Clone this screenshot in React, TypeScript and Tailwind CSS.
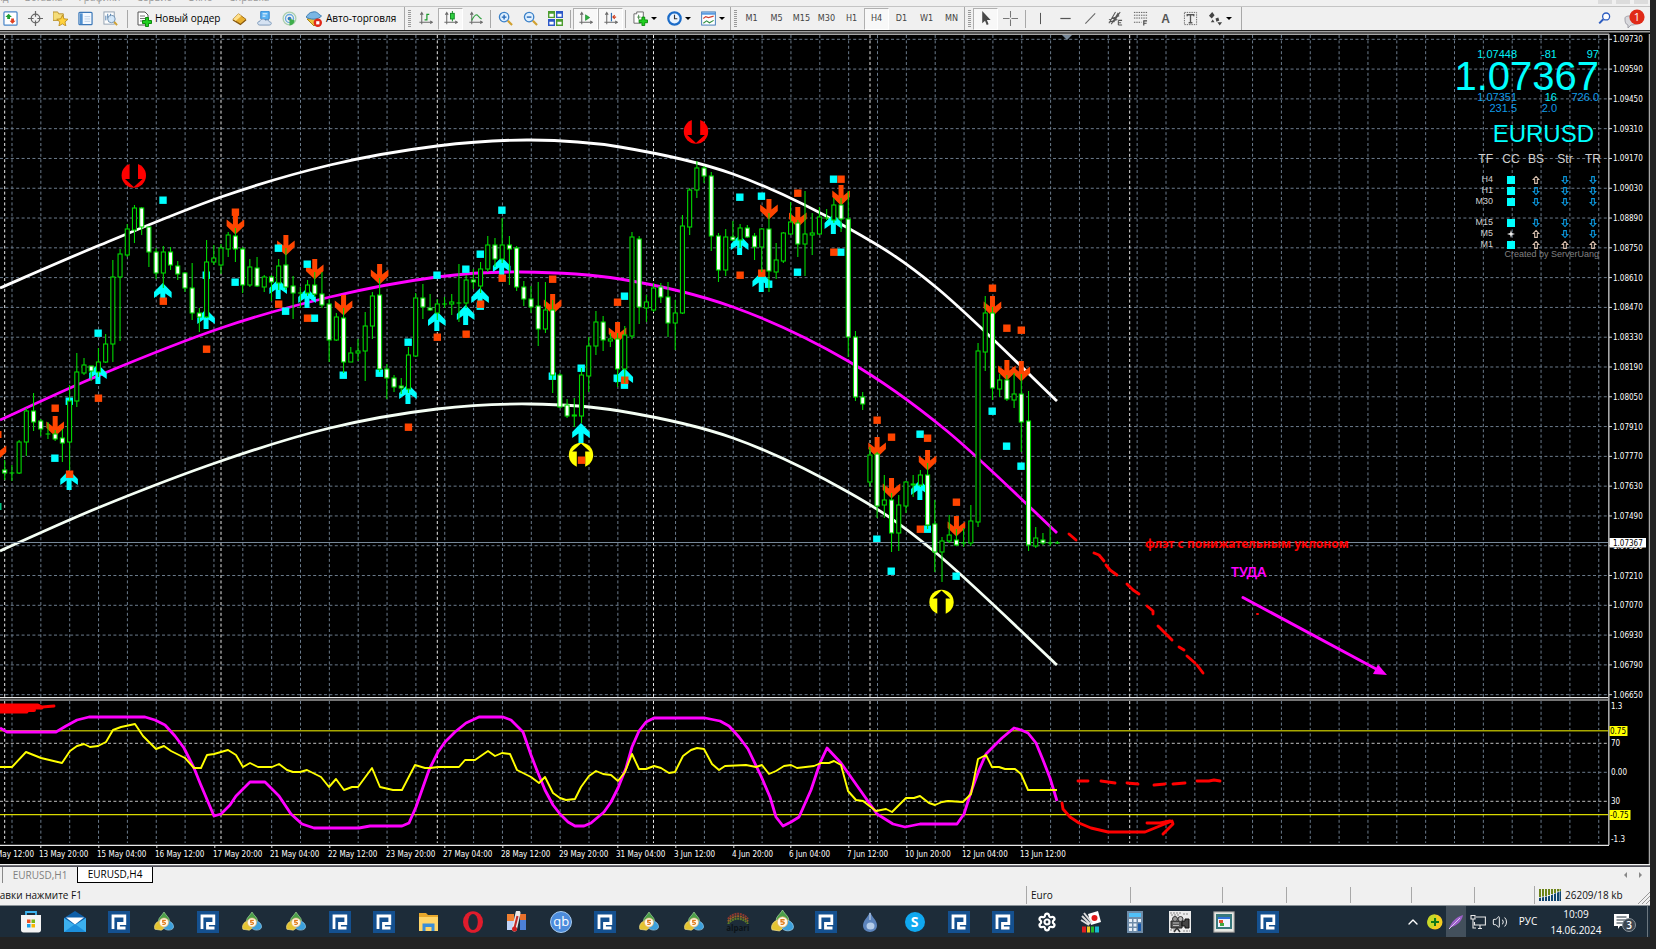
import React from 'react';
import { Settings, ChevronUp, Volume2 } from 'lucide-react';

const uiFont = "font-['Open_Sans','Noto_Sans',sans-serif]";

/* ---------- chart data ---------- */

// high, low, body top, body bottom, 1 = rising
type Candle = [number, number, number, number, number];

const candles: Candle[] = [
    [460, 480, 470, 473, 0], [465, 481, 473, 473, 0], [440, 474, 442, 473, 1], [408, 456, 411, 442, 1],
    [393, 431, 411, 422, 0], [419, 436, 421, 429, 0], [422, 439, 434, 434, 0], [430, 441, 434, 439, 0],
    [429, 462, 438, 443, 0], [385, 470, 401, 442, 1], [353, 407, 372, 401, 1], [358, 375, 365, 373, 1],
    [366, 381, 366, 371, 0], [348, 377, 362, 372, 1], [334, 363, 344, 362, 1], [260, 362, 277, 344, 1],
    [249, 341, 254, 277, 1], [224, 257, 229, 255, 1], [205, 243, 208, 230, 1], [207, 235, 208, 227, 0],
    [227, 267, 227, 252, 0], [248, 279, 252, 273, 0], [246, 288, 252, 273, 1], [247, 270, 252, 265, 0],
    [261, 280, 266, 274, 0], [272, 292, 273, 288, 0], [263, 320, 288, 313, 0], [308, 332, 313, 317, 0],
    [240, 318, 262, 317, 1], [245, 265, 258, 262, 1], [244, 274, 248, 265, 1], [232, 257, 235, 249, 1],
    [228, 262, 236, 249, 0], [247, 293, 249, 285, 0], [259, 287, 267, 285, 1], [257, 287, 268, 286, 0],
    [275, 292, 277, 287, 1], [275, 301, 277, 282, 0], [259, 290, 266, 283, 1], [248, 290, 265, 287, 0],
    [276, 319, 286, 293, 0], [287, 308, 293, 293, 0], [280, 296, 285, 293, 1], [272, 297, 285, 294, 0],
    [272, 308, 294, 305, 0], [299, 362, 304, 340, 0], [313, 341, 317, 340, 1], [308, 373, 318, 362, 0],
    [347, 362, 353, 362, 1], [339, 361, 351, 353, 1], [312, 381, 326, 351, 1], [292, 339, 296, 326, 1],
    [278, 372, 295, 369, 0], [364, 399, 369, 378, 0], [375, 392, 378, 387, 0], [378, 394, 386, 388, 0],
    [347, 393, 355, 389, 1], [293, 357, 298, 356, 1], [284, 319, 298, 307, 0], [294, 311, 308, 310, 0],
    [299, 320, 304, 313, 1], [297, 308, 304, 304, 0], [294, 315, 302, 304, 1], [264, 322, 303, 303, 0],
    [275, 308, 280, 303, 1], [269, 289, 280, 282, 0], [262, 293, 269, 286, 1], [236, 272, 245, 269, 1],
    [238, 267, 245, 259, 0], [218, 263, 245, 259, 1], [236, 285, 245, 249, 0], [246, 291, 248, 287, 0],
    [281, 306, 287, 299, 0], [286, 313, 299, 307, 0], [282, 346, 306, 329, 0], [282, 333, 310, 329, 1],
    [300, 393, 310, 375, 0], [373, 408, 375, 407, 0], [399, 418, 405, 416, 0], [398, 427, 415, 416, 0],
    [368, 423, 375, 416, 1], [337, 392, 346, 376, 1], [311, 355, 322, 346, 1], [316, 351, 322, 340, 0],
    [333, 347, 339, 341, 1], [333, 387, 339, 369, 0], [326, 383, 335, 369, 1], [232, 339, 237, 336, 1],
    [236, 324, 239, 307, 0], [295, 322, 302, 308, 1], [283, 312, 288, 310, 1], [283, 303, 287, 297, 0],
    [282, 337, 297, 323, 0], [300, 350, 313, 323, 1], [215, 314, 226, 313, 1], [188, 235, 190, 227, 1],
    [161, 198, 168, 190, 1], [166, 183, 168, 176, 0], [172, 251, 176, 236, 0], [233, 282, 236, 270, 0],
    [229, 276, 237, 270, 1], [221, 241, 237, 240, 0], [224, 248, 228, 240, 1], [225, 238, 228, 237, 0],
    [233, 260, 236, 247, 0], [228, 272, 229, 247, 1], [213, 292, 229, 271, 0], [243, 279, 260, 272, 1],
    [232, 263, 233, 261, 1], [202, 235, 222, 234, 1], [220, 257, 223, 244, 0], [191, 276, 234, 244, 1],
    [213, 255, 233, 235, 1], [207, 235, 217, 234, 1], [209, 220, 218, 218, 0], [198, 223, 205, 220, 1],
    [198, 232, 205, 219, 0], [191, 357, 219, 337, 0], [331, 401, 337, 397, 0], [392, 410, 397, 404, 0],
    [447, 487, 455, 482, 1], [452, 518, 454, 506, 0], [475, 518, 500, 505, 1], [493, 552, 500, 533, 0],
    [495, 551, 505, 533, 1], [481, 513, 482, 506, 1], [475, 497, 484, 485, 1], [470, 487, 475, 485, 1],
    [463, 529, 475, 525, 0], [500, 572, 524, 552, 0], [537, 582, 541, 552, 1], [515, 543, 535, 541, 1],
    [529, 546, 540, 545, 0], [528, 547, 543, 543, 0], [505, 546, 521, 543, 1], [343, 527, 351, 522, 1],
    [296, 371, 313, 352, 1], [307, 400, 313, 388, 0], [374, 397, 380, 389, 1], [375, 401, 380, 399, 0],
    [373, 408, 394, 400, 1], [374, 452, 394, 422, 0], [391, 551, 421, 545, 0], [527, 548, 538, 546, 1],
    [533, 545, 540, 543, 0], [525, 546, 543, 543, 0], [541, 544, 543, 543, 0],
];

// [candle index, y of the arrow's top]
const upArrows: [number, number][] = [
    [9, 470], [13, 364], [22, 283], [28, 309], [38, 279], [42, 288], [56, 384], [60, 311], [64, 305],
    [66, 288], [69, 257], [80, 423], [86, 368], [102, 235], [105, 272], [115, 214], [127, 480],
];
const downArrows: [number, number][] = [
    [-1, 440], [7, 416], [32, 214], [39, 235], [43, 259], [47, 295], [52, 264], [76, 294], [85, 322],
    [106, 199], [110, 207], [116, 185], [121, 437], [123, 478], [128, 450], [132, 516], [137, 296],
    [139, 360], [141, 361],
];

// [candle index, y of the square's centre]
const cyanMarks: [number, number][] = [
    [7, 458], [9, 401], [13, 333], [22, 200], [28, 275], [32, 282], [38, 248], [39, 311], [42, 264],
    [43, 318], [47, 375], [52, 373], [56, 342], [60, 275], [64, 269], [66, 254], [66, 306], [69, 210],
    [76, 376], [80, 368], [85, 378], [86, 296], [86, 385], [102, 197], [105, 196], [106, 284],
    [110, 272], [115, 179], [116, 252], [121, 539], [123, 571], [127, 434], [128, 529], [132, 576],
    [137, 411], [139, 446], [141, 466],
];
const orangeMarks: [number, number][] = [
    [7, 408], [9, 474], [13, 398], [22, 301], [28, 349], [32, 212], [38, 304], [42, 318], [56, 427],
    [60, 337], [64, 334], [66, 304], [69, 278], [76, 279], [80, 460], [85, 302], [86, 380], [102, 275],
    [105, 273], [110, 193], [115, 252], [116, 179], [121, 420], [123, 437], [127, 529], [128, 438],
    [132, 502], [137, 288], [139, 328], [141, 330],
];

type Point = [number, number];

const upperBand: Point[] = [[0, 288], [100, 245], [221, 197], [330, 165], [437, 146], [530, 140], [620, 147], [733, 174], [848, 228], [937, 288], [1057, 401]];
const midBand: Point[] = [[0, 420], [100, 375], [221, 328], [330, 297], [437, 277], [520, 272], [620, 279], [733, 307], [848, 361], [947, 431], [1057, 533]];
const lowerBand: Point[] = [[0, 551], [100, 507], [221, 461], [330, 428], [437, 409], [530, 404], [620, 411], [733, 438], [848, 492], [935, 552], [1057, 665]];

const cycleLine = '0,728 7,732 56,732 66,726 77,720 89,717 145,717 155,720 165,725 175,736 184,748 194,768 200,783 214,816 221,814 230,805 236,796 250,782 265,782 279,796 291,814 302,824 314,828 359,828 370,826 402,826 409,823 416,807 429,770 438,752 445,742 455,732 466,723 479,717 503,717 511,720 523,732 531,755 536,768 545,790 553,805 560,814 568,822 575,826 584,826 591,823 604,812 611,802 618,788 626,768 632,747 639,731 646,722 654,718 705,718 720,721 729,726 739,737 748,749 761,776 770,797 776,817 783,826 791,822 799,817 811,790 820,763 827,748 841,763 877,814 893,824 905,827 920,824 957,824 964,814 971,792 979,770 986,754 1002,738 1014,728 1021,730 1028,733 1036,743 1043,760 1050,778 1057,801';
const oscLine = '0,767 12,767 26,752 41,758 62,763 70,751 77,746 84,744 90,747 98,746 106,742 113,730 121,727 135,724 143,736 156,749 164,746 171,751 185,758 194,768 201,768 207,755 214,754 228,750 236,755 243,767 250,763 258,767 272,767 279,764 287,770 293,772 300,772 307,770 321,777 329,787 336,779 344,790 352,787 358,787 372,768 380,787 393,790 402,790 415,765 425,768 430,768 438,767 459,767 465,760 475,760 488,751 495,756 502,753 510,754 517,770 531,777 539,783 545,777 553,793 560,798 566,800 575,799 581,787 589,776 596,771 603,774 611,775 618,781 625,772 632,754 639,769 646,769 654,766 661,768 669,773 675,772 683,756 691,750 697,748 704,749 712,764 719,770 725,766 746,765 756,767 762,765 769,774 776,771 784,766 791,765 797,768 814,766 821,763 829,763 834,761 841,765 848,791 856,800 863,801 876,811 886,809 892,812 906,798 914,798 920,796 929,803 935,805 942,802 948,801 963,802 971,794 978,759 986,755 992,767 999,767 1005,769 1015,769 1021,774 1028,790 1057,790';

const redStrokes = [
    '1069,534 1076,540', '1094,553 1099,555 1104,561', '1106,565 1110,570 1117,575',
    '1127,584 1133,590 1139,594', '1147,606 1153,611 1153,614', '1158,626 1165,633 1172,640',
    '1179,647 1184,650', '1187,656 1195,663', '1197,665 1203,673',
    '1078,781 1088,781', '1101,781 1115,783', '1127,783 1138,784', '1154,785 1165,784',
    '1173,784 1185,783', '1197,781 1209,781 1214,780 1220,781',
    '1062,803 1063,809 1070,817 1079,823 1091,828 1108,832 1145,832 1172,821 1173,824 1163,834',
    '1147,823 1160,823 1170,821',
    '0,705 38,705 42,707 54,706', '0,708 42,708', '0,712 27,712',
];

const dates: [number, string][] = [
    [40, '13 May 20:00'], [98, '15 May 04:00'], [156, '16 May 12:00'], [214, '17 May 20:00'],
    [271, '21 May 04:00'], [329, '22 May 12:00'], [387, '23 May 20:00'], [444, '27 May 04:00'],
    [502, '28 May 12:00'], [560, '29 May 20:00'], [617, '31 May 04:00'], [675, '3 Jun 12:00'],
    [733, '4 Jun 20:00'], [790, '6 Jun 04:00'], [848, '7 Jun 12:00'], [906, '10 Jun 20:00'],
    [963, '12 Jun 04:00'], [1021, '13 Jun 12:00'],
];

const barX = (i: number) => 4.7 + i * 7.21;
const gridX = Array.from({ length: 56 }, (_, i) => 12 + i * 28.85);
const gridY = Array.from({ length: 23 }, (_, i) => 39.3 + i * 29.79);
const weekX = [4.7, 221, 437.3, 653.5, 870, 1129.7];

// Catmull-Rom spline through the points
const curve = (pts: Point[]) =>
    pts.slice(1).reduce((d, p2, i) => {
        const p0 = pts[Math.max(i - 1, 0)];
        const p1 = pts[i];
        const p3 = pts[Math.min(i + 2, pts.length - 1)];
        const c1 = [p1[0] + (p2[0] - p0[0]) / 6, p1[1] + (p2[1] - p0[1]) / 6];
        const c2 = [p2[0] - (p3[0] - p1[0]) / 6, p2[1] - (p3[1] - p1[1]) / 6];
        return `${d}C${c1.join(' ')} ${c2.join(' ')} ${p2.join(' ')}`;
    }, `M${pts[0].join(' ')}`);

const ArrowUpMark = ({ x, y }: { x: number; y: number }) => (
    <path transform={`translate(${x - 0.5} ${y})`} fill="#00ffff" d="M0 0 L8.8 9 V15 L2.5 10.5 V20 H-2.5 V10.5 L-8.8 15 V9 Z" />
);

const ArrowDownMark = ({ x, y }: { x: number; y: number }) => (
    <path transform={`translate(${x} ${y})`} fill="#ff4500" d="M0 20.5 L8.8 12 V5.5 L2.5 10.5 V0 H-2.5 V10.5 L-8.8 5.5 V12 Z" />
);

const SignalCircle = ({ x, y, up }: { x: number; y: number; up?: boolean }) => (
    <g transform={`translate(${x} ${y}) scale(1 ${up ? -1 : 1})`}>
        <circle r="12.2" fill={up ? '#ffff00' : '#ff0000'} />
        <path d="M-4.2 -13 H4.2 V3.6 H8.8 L0 11.4 L-8.8 3.6 H-4.2 Z" fill="#000" />
    </g>
);

const Chart = () => (
    <svg viewBox="0 31 1650 836" className="block h-auto w-full" role="img" aria-label="EURUSD,H4">
        <rect x="0" y="31" width="1650" height="836" fill="#000" />
        <rect x="0" y="31" width="1650" height="1.5" fill="#a0a0a0" />
        <rect x="0" y="33.5" width="1609" height="1.5" fill="#a8a8a8" />

        {/* grid */}
        <g stroke="#6b7b8c" strokeWidth="1" strokeDasharray="3 2.4">
            {gridX.map(x => <path key={x} d={`M${x} 35V697M${x} 701V843`} />)}
            {gridY.map(y => <path key={y} d={`M0 ${y}H1608`} />)}
            <path d="M0 772.3H1608" />
            <path d="M0 743.3H1608M0 801.3H1608" stroke="#c0c0c0" />
            {weekX.map(x => <path key={x} d={`M${x} 35V697M${x} 701V843`} stroke="#e8e8e8" />)}
        </g>
        <path d="M1062 35H1072L1067 40Z" fill="#778899" />

        {/* channel */}
        <g fill="none" strokeWidth="2.8" strokeLinejoin="round">
            <path d={curve(upperBand)} stroke="#fff" />
            <path d={curve(midBand)} stroke="#ff00ff" />
            <path d={curve(lowerBand)} stroke="#f5fff5" />
        </g>

        {/* signals */}
        <SignalCircle x={133.8} y={175.5} />
        <SignalCircle x={696} y={131.5} />
        <SignalCircle x={581} y={455} up />
        <SignalCircle x={941.5} y={602} up />
        {upArrows.map(([i, y]) => <ArrowUpMark key={i} x={barX(i)} y={y} />)}
        {downArrows.map(([i, y]) => <ArrowDownMark key={i} x={barX(i)} y={y} />)}
        {cyanMarks.map(([i, y]) => <rect key={`${i}-${y}`} x={barX(i) - 4} y={y - 3.5} width="7.4" height="7.4" fill="#00ffff" />)}
        {orangeMarks.map(([i, y]) => <rect key={`${i}-${y}`} x={barX(i) - 3.7} y={y - 3.5} width="7.4" height="7.4" fill="#ff4500" />)}
        <rect x="0" y="431" width="1.5" height="7" fill="#ff4500" />
        <rect x="0" y="503" width="1.5" height="7" fill="#00c080" />

        {/* bid line */}
        <path d="M0 542.5H1609" stroke="#778899" />

        {/* candles */}
        <g stroke="#00d800" strokeWidth="1.1">
            {candles.map(([high, low, top, bottom, up], i) => {
                const x = barX(i);
                return (
                    <g key={i}>
                        <path d={`M${x} ${high}V${low}`} />
                        {top === bottom
                            ? <path d={`M${x - 2.4} ${top}H${x + 2.4}`} />
                            : <rect x={x - 2} y={top} width="4" height={bottom - top} fill={up ? '#000' : '#fff'} />}
                    </g>
                );
            })}
        </g>

        {/* oscillator window */}
        <path d="M0 697.7H1609M0 700H1609" stroke="#e8e8e8" strokeWidth="1.2" />
        <path d="M0 845.3H1609" stroke="#e8e8e8" strokeWidth="1.2" />
        <path d="M0 730.7H1609" stroke="#a8a800" strokeWidth="1.4" />
        <path d="M0 814.7H1609" stroke="#d8d800" strokeWidth="1.2" />
        <polyline points={cycleLine} fill="none" stroke="#ff00ff" strokeWidth="2.8" strokeLinejoin="round" />
        <polyline points={oscLine} fill="none" stroke="#ffff00" strokeWidth="1.9" strokeLinejoin="round" />

        {/* hand-made notes */}
        <g fill="none" stroke="#ff0000" strokeWidth="2.9" strokeLinecap="round" strokeLinejoin="round">
            {redStrokes.map(points => <polyline key={points} points={points} />)}
            <path d="M0 707H38M0 710H34" strokeWidth="4" />
            <path d="M1257 614h1" strokeWidth="2" />
        </g>
        <path d="M1243 597.5L1378 670" stroke="#ff00ff" strokeWidth="2.9" strokeLinecap="round" />
        <path d="M1387 675L1373 674L1378 664.5Z" fill="#ff00ff" />
        <text x="1145" y="548" fill="#ff0000" className="font-['Noto_Sans',sans-serif] text-[12px] font-bold">флэт с понижательным уклоном</text>
        <text x="1231" y="577" fill="#ff00ff" className="font-['Noto_Sans',sans-serif] text-[14px] font-semibold">ТУДА</text>

        {/* price scale */}
        <path d="M1608.8 34V845" stroke="#a8a8a8" strokeWidth="1.6" />
        <g fill="#fff" className="font-['DejaVu_Sans_Condensed','DejaVu_Sans',sans-serif] text-[8px]">
            {gridY.map((y, i) => (
                <React.Fragment key={y}>
                    <path d={`M1609 ${y}H1612`} stroke="#e0e0e0" />
                    <text x="1613" y={y + 3}>{(1.0973 - i * 0.0014).toFixed(5)}</text>
                </React.Fragment>
            ))}
            <text x="1611" y="709">1.3</text>
            <text x="1611" y="746">70</text>
            <text x="1611" y="775">0.00</text>
            <text x="1611" y="804">30</text>
            <text x="1611" y="842">-1.3</text>
            {dates.map(([x, label]) => (
                <React.Fragment key={label}>
                    <path d={`M${x + 0.8} 845V848`} stroke="#e0e0e0" />
                    <text x={x - 1} y="857">{label}</text>
                </React.Fragment>
            ))}
            <text x="34" y="857" textAnchor="end">10 May 12:00</text>
        </g>
        <g className="font-['DejaVu_Sans_Condensed','DejaVu_Sans',sans-serif] text-[8px]">
            <rect x="1609.5" y="538" width="36.5" height="9.5" fill="#fff" />
            <text x="1613" y="546" fill="#000">1.07367</text>
            <rect x="1609.5" y="726" width="18" height="10" fill="#ffff00" />
            <text x="1610" y="734">0.75</text>
            <rect x="1609.5" y="810" width="21" height="10" fill="#ffff00" />
            <text x="1610" y="818">-0.75</text>
        </g>

        {/* window frame */}
        <path d="M1649.3 34V864" stroke="#d0d0d0" />
        <rect x="0" y="864" width="1650" height="1.6" fill="#f4f4f4" />
        <rect x="0" y="865.6" width="1650" height="1.4" fill="#50505a" />
    </svg>
);

/* ---------- price panel ---------- */

const panelRows: { tf: string; cells: string[]; gap?: boolean }[] = [
    { tf: 'H4', cells: ['s', 'u', 'd', 'd'] },
    { tf: 'H1', cells: ['s', 'd', 'd', 'd'] },
    { tf: 'M30', cells: ['s', 'd', 'd', 'd'] },
    { tf: 'M15', cells: ['s', 'd', 'd', 'd'], gap: true },
    { tf: 'M5', cells: ['x', 'u', 'd', 'd'] },
    { tf: 'M1', cells: ['s', 'u', 'u', 'u'] },
];

const Mark = ({ kind }: { kind: string }) => {
    if (kind === 's') return <span className="mx-auto block size-2 bg-[#00ffff]" />;
    return (
        <svg viewBox="0 0 9 10" className="mx-auto block h-2.5 w-2" fill="none">
            {kind === 'x' && <path d="M4.5 .5L5.5 4L9 5L5.5 6L4.5 9.5L3.5 6L0 5L3.500 4Z" fill="#eee" />}
            {kind === 'u' && <path d="M4.5 1L7.8 4.5H6V8.8H3V4.5H1.2Z" stroke="#d9c0ae" strokeWidth="1.2" />}
            {kind === 'd' && <path d="M4.5 9L7.8 5.5H6V1.2H3V5.5H1.2Z" stroke="#0a96dc" strokeWidth="1.2" />}
        </svg>
    );
};

const PricePanel = () => (
    <div className="absolute top-5 right-[51px] text-right font-['Liberation_Sans',Arial,sans-serif] text-[11px] leading-[11px] text-[#00f0f8]">
        <div className="grid grid-cols-[1fr_40px_42px]">
            <span>1.07448</span><span>-81</span><span>97</span>
        </div>
        <div className="text-[40px] leading-8 text-[#00ffff]">1.07367</div>
        <div className="grid grid-cols-[1fr_40px_42px] text-[#109ce8]">
            <span>1.07351</span><span className="text-[#00f0f8]">16</span><span>726.0</span>
            <span>231.5</span><span>2.0</span>
        </div>
        <div className="mt-[5px] pr-[5px] text-[24px] leading-[30px] text-[#00ffff]">EURUSD</div>
        <table className="mt-1 -mr-1.5 ml-auto table-fixed border-collapse text-center text-[9px] leading-[11px] text-[#d0d0d0]">
            <thead className="text-[12px] leading-3">
                <tr>
                    <th className="w-8 pr-1.5 text-right font-normal">TF</th>
                    <th className="w-6 font-normal">CC</th>
                    <th className="w-[26px] font-normal">BS</th>
                    <th className="w-8 font-normal">Str</th>
                    <th className="w-6 font-normal">TR</th>
                </tr>
            </thead>
            <tbody>
                <tr className="h-[9px]" />
                {panelRows.map(row => (
                    <React.Fragment key={row.tf}>
                        {row.gap && <tr className="h-[10px]" />}
                        <tr>
                            <th className="pr-1.5 text-right font-normal">{row.tf}</th>
                            {row.cells.map((kind, i) => <td key={i}><Mark kind={kind} /></td>)}
                        </tr>
                    </React.Fragment>
                ))}
            </tbody>
        </table>
        <div className="text-[9px] leading-[9px] text-[#808080]">Created by ServerUang</div>
    </div>
);

/* ---------- toolbar ---------- */

type Art = { children: React.ReactNode; className?: string };

const Glyph = ({ children, className = 'size-4' }: Art) => (
    <svg viewBox="0 0 16 16" className={`shrink-0 ${className}`} fill="none" aria-hidden="true">{children}</svg>
);

const Axes = () => <path d="M4 2V14M1.5 12H15M2.5 4L4 1.5L5.5 4M13 10.5L15.5 12L13 13.5" stroke="#6a6a6a" strokeWidth="1.1" />;

const icons = {
    market: <><rect x="1" y="1" width="14" height="14" rx="1" fill="#fff" stroke="#4a86c8" strokeWidth="1.3" /><path d="M2.500 6.500L6 3L9.500 6.500H7.500V8.500H4.500V6.500Z" fill="#20a030" /><path d="M7 10.500L10 13.500L13.500 10.500H11.700V8H8.700V10.500Z" fill="#e04020" /></>,
    cross: <><circle cx="8" cy="8" r="4.6" stroke="#666" strokeWidth="1.3" /><path d="M8 0V6M8 10V16M0 8H6M10 8H16" stroke="#666" strokeWidth="1.3" /></>,
    folder: <><path d="M0 1H5L6 3H11V10H0Z" fill="#f5dd7a" stroke="#b89030" /><path d="M10 4.500L11.7 8.300L16 8.800L12.800 11.600L13.700 16L10 13.700L6.300 16L7.200 11.600L4 8.800L8.300 8.300Z" fill="#ffd23c" stroke="#b88a20" strokeWidth=".9" /></>,
    terminal: <><rect x="1" y="1.500" width="14" height="13" rx="1" fill="#f4f9ff" stroke="#3c78b8" strokeWidth="1.3" /><path d="M2 2.500H5V14H2Z" fill="#5090d0" /><path d="M7 6H13M7 8.500H13M7 11H13" stroke="#bcd0e8" /></>,
    tester: <><rect x="1" y="1" width="11" height="13" fill="#fdfdfd" stroke="#90a0b0" /><path d="M3 10V5M5 8V3M8 7V3" stroke="#5080b0" /><circle cx="9" cy="8.5" r="4" fill="#cfe6fa" fillOpacity=".9" stroke="#7090b0" /><path d="M12 11.5L15 15" stroke="#d0a030" strokeWidth="2" /></>,
    order: <><path d="M2 1H9L12 4V14H2Z" fill="#fff" stroke="#555" /><path d="M4 5H9M4 7.5H9M4 10H7" stroke="#777" /><path d="M9.500 6.500H12.500V9.500H15.500V12.500H12.500V15.500H9.500V12.500H6.500V9.500H9.500Z" fill="#20d020" stroke="#008000" strokeWidth=".9" /></>,
    gold: <><path d="M1 9L7 3L15 9L9 14Z" fill="#e8b030" stroke="#a06c10" /><path d="M1 9L7 3L10 5.3L3.5 11Z" fill="#ffe08a" /><path d="M1 9.5L9 14.5L15 9.5" stroke="#8a5a10" strokeWidth="1.2" /></>,
    cloud: <><rect x="4" y="0" width="9" height="9" rx="1" fill="#5cb4f4" stroke="#2a7cc8" /><path d="M6 3H11M6 5.500H9" stroke="#fff" /><path d="M3 15C0 15 0 11 3 11C4 8 8 8 9 10C11 8.5 13 10 13 11.5C16 11.5 16 15 13 15Z" fill="#d5e2f2" stroke="#7a96b8" /></>,
    signal: <><circle cx="8" cy="8" r="6.8" stroke="#a9cfae" strokeWidth="1.4" /><circle cx="8" cy="8" r="4.3" stroke="#66aadd" strokeWidth="1.4" /><circle cx="8" cy="8" r="2" fill="#3478c8" /><path d="M8 8V15.5C11 15 13 13 13.5 10Z" fill="#3fae4c" /></>,
    auto: <><path d="M1 8L8 15L14 9L8 7Z" fill="#ecc23c" stroke="#a88418" /><path d="M0 6C2 4 3 1 7 1C11 0 12 3 15.500 5C12 9 4 9 0 6Z" fill="#7ab6e4" stroke="#3f7cb0" /><circle cx="11.800" cy="11.800" r="4.200" fill="#e02818" /><rect x="10.200" y="10.200" width="3.200" height="3.200" fill="#fff" /></>,
    bars: <><Axes /><path d="M9.5 3V10M9.5 3.5H12M7 9.5H9.5" stroke="#1c9a2c" strokeWidth="1.3" /></>,
    candles: <><Axes /><path d="M10 0V11" stroke="#118822" /><rect x="8" y="2.5" width="4" height="6" fill="#30d040" stroke="#118822" /></>,
    line: <><Axes /><path d="M4 10C6 6 8 4 9.5 4C11 5 12 7 14.5 8.5" stroke="#30a040" strokeWidth="1.2" /></>,
    zoomIn: <><circle cx="6.5" cy="6.5" r="5" fill="#dff0ff" stroke="#3a80c8" strokeWidth="1.4" /><path d="M4 6.5H9M6.5 4V9" stroke="#2468b8" strokeWidth="1.5" /><path d="M10.5 10.5L15 15" stroke="#d0a030" strokeWidth="2.3" /></>,
    zoomOut: <><circle cx="6.5" cy="6.5" r="5" fill="#dff0ff" stroke="#3a80c8" strokeWidth="1.4" /><path d="M4 6.5H9" stroke="#2468b8" strokeWidth="1.5" /><path d="M10.5 10.5L15 15" stroke="#d0a030" strokeWidth="2.3" /></>,
    tile: <><path d="M0 0H7.500V7.500H0Z" fill="#4c9c30" /><path d="M8.500 0H16V7.500H8.500Z" fill="#2c58c8" /><path d="M0 8.500H7.500V16H0Z" fill="#2c58c8" /><path d="M8.500 8.500H16V16H8.500Z" fill="#4c9c30" /><path d="M1.500 3H6V6H1.500ZM10 3H14.500V6H10ZM1.500 11.500H6V14.500H1.500ZM10 11.500H14.500V14.500H10Z" fill="#fff" /></>,
    scroll: <><Axes /><path d="M8 4L12.5 7L8 10Z" fill="#2cb040" stroke="#128024" strokeWidth=".6" /></>,
    shift: <><Axes /><path d="M9 2V11" stroke="#3070b0" strokeWidth="1.3" /><path d="M14 6.5H10.5M12.5 4.5L10.5 6.5L12.5 8.5" stroke="#d04020" strokeWidth="1.2" /></>,
    indicator: <><path d="M1 3H4V1H11V11H8V13H1Z" fill="#fff" stroke="#666" /><path d="M6 4V9M4.5 6.5H8" stroke="#448844" /><path d="M9.500 6.500H12.500V9.500H15.500V12.500H12.500V15.500H9.500V12.500H6.500V9.500H9.500Z" fill="#20d020" stroke="#008000" strokeWidth=".9" /></>,
    clock: <><circle cx="8" cy="8" r="6.6" fill="#eaf4ff" stroke="#1c6cc8" strokeWidth="2.4" /><path d="M8 4V8.3H11" stroke="#333" strokeWidth="1.2" /></>,
    template: <><rect x=".7" y="1" width="14.6" height="14" fill="#fff" stroke="#3c78b8" /><path d="M1 1.5H15V4H1Z" fill="#5c9ce0" /><path d="M2.5 8L5 6L8 7L13.5 5.5" stroke="#d04030" strokeWidth="1.2" /><path d="M2.5 13L6 10.5L9 12.5L13.5 10" stroke="#309040" strokeWidth="1.2" /></>,
    cursor: <path d="M4.5 0V13L7.5 10.3L9.3 15L11.3 14L9.5 9.7H13.5Z" fill="#4a4a4a" />,
    plus: <path d="M8 0V7M8 9V16M0 8H7M9 8H16" stroke="#777" strokeWidth="1.1" />,
    vline: <path d="M8 2V14" stroke="#555" strokeWidth="1.1" />,
    hline: <path d="M2.5 8H13.5" stroke="#555" strokeWidth="1.3" />,
    trend: <path d="M2.5 13.5L13 2.5" stroke="#666" strokeWidth="1.1" />,
    channel: <path d="M1 13L8 1M3.5 14L11 2M6 12L13 1M1 9L12 5M1 12L10 9M11 10H15M11 12.5H14M11 15H15M11 10V15" stroke="#555" strokeWidth="1.1" />,
    fibo: <><path d="M1 1.5H15M1 4.5H15M1 7.5H15M1 12H9" stroke="#555" strokeDasharray="1.5 1" /><path d="M11.5 15.5V10.5H15M11.5 13H14.5" stroke="#444" strokeWidth="1.2" /></>,
    label: <><rect x="1.5" y="1.5" width="13" height="13" stroke="#666" strokeDasharray="1.5 1" /><path d="M4.5 5.5V4H11.5V5.5M8 4V12.5M6 12.5H10" stroke="#555" strokeWidth="1.4" /></>,
    shapes: <path d="M1 5L4.5 1L7 4.5L4 8ZM8 8L11 7L12 10L9 11.5ZM10 12H15L12.5 15.5ZM5 9L7 12H3Z" fill="#444" />,
};

const Tool = ({ name, pressed, wide, label }: { name: keyof typeof icons; pressed?: boolean; wide?: boolean; label: string }) => (
    <button
        aria-label={label}
        className={`flex h-[22px] shrink-0 items-center justify-center gap-[3px] ${wide ? 'w-[34px]' : 'w-[25px]'} ${pressed ? 'border border-[#b0b0b0] border-r-white border-b-white bg-[#f8f8f8]' : ''}`}
    >
        <Glyph className="size-[15px]">{icons[name]}</Glyph>
        {wide && <span className="h-0 w-0 border-x-3 border-t-3 border-x-transparent border-t-black" />}
    </button>
);

const Divider = () => <span className="mx-0.5 h-[18px] w-px shrink-0 bg-[#a8a8a8]" />;
const Grip = () => <span className="mr-0.5 ml-[3px] h-[18px] w-[3px] shrink-0 bg-[repeating-linear-gradient(#9a9a9a_0_1px,#f0f0f0_1px_2px)]" />;

const timeframes = ['M1', 'M5', 'M15', 'M30', 'H1', 'H4', 'D1', 'W1', 'MN'];

const Toolbar = () => (
    <div className="flex h-6 items-center border-t border-[#c4c4c4] bg-[#f0f0f0] text-black">
        <div className="flex h-full items-center border-r border-[#a8a8a8] pr-[5px]">
            <div className="-ml-0.5 flex pr-0.5">
                <Tool name="market" label="Обзор рынка" />
                <Tool name="cross" label="Окно данных" />
                <Tool name="folder" label="Навигатор" />
                <Tool name="terminal" label="Терминал" />
                <Tool name="tester" label="Тестер стратегий" />
            </div>
            <Divider />
            <button className="flex h-[22px] w-[97px] items-center gap-[3px] pl-1.5 whitespace-nowrap">
                <Glyph>{icons.order}</Glyph>
                <span className="text-[10px] font-medium">Новый ордер</span>
            </button>
            <Tool name="gold" label="MetaEditor" />
            <Tool name="cloud" label="VPS" />
            <Tool name="signal" label="Сигналы" />
            <button className="flex h-[22px] w-[97px] items-center gap-1 pl-1 whitespace-nowrap">
                <Glyph>{icons.auto}</Glyph>
                <span className="text-[10px] font-medium">Авто-торговля</span>
            </button>
        </div>
        <Grip />
        <div className="flex h-full items-center border-r border-[#a8a8a8]">
            <Tool name="bars" label="Бары" />
            <Tool name="candles" label="Свечи" pressed />
            <Tool name="line" label="Линия" />
            <Divider />
            <Tool name="zoomIn" label="Увеличить" />
            <Tool name="zoomOut" label="Уменьшить" />
            <Tool name="tile" label="Окна мозаикой" />
            <Divider />
            <Tool name="scroll" label="Автопрокрутка" pressed />
            <Tool name="shift" label="Сдвиг графика" pressed />
            <Divider />
            <Tool name="indicator" label="Индикаторы" wide />
            <Tool name="clock" label="Периоды" wide />
            <Tool name="template" label="Шаблоны" wide />
        </div>
        <Grip />
        <div className="flex h-full items-center border-r border-[#a8a8a8]">
            {timeframes.map(tf => (
                <button
                    key={tf}
                    className={`h-[22px] w-[25px] font-['DejaVu_Sans_Condensed','DejaVu_Sans',sans-serif] text-[9px] text-[#444] ${tf === 'H4' ? 'border border-[#b0b0b0] border-r-white border-b-white bg-[#f8f8f8]' : ''}`}
                >
                    {tf}
                </button>
            ))}
        </div>
        <Grip />
        <div className="flex h-full items-center border-r border-[#a8a8a8] pr-1">
            <Tool name="cursor" label="Курсор" pressed />
            <Tool name="plus" label="Перекрестие" />
            <Divider />
            <Tool name="vline" label="Вертикальная линия" />
            <Tool name="hline" label="Горизонтальная линия" />
            <Tool name="trend" label="Трендовая линия" />
            <Tool name="channel" label="Канал" />
            <Tool name="fibo" label="Фибоначчи" />
            <button className="h-[22px] w-[25px] font-['Liberation_Sans',Arial,sans-serif] text-[12px] font-bold text-[#555]">A</button>
            <Tool name="label" label="Метка" />
            <Tool name="shapes" label="Стрелки" wide />
        </div>
        <div className="ml-auto flex items-center gap-2">
            <button aria-label="Поиск" className="h-[15px] w-4">
                <svg viewBox="0 0 16 16" className="size-[13px]" fill="none" aria-hidden="true">
                    <circle cx="10" cy="5.5" r="4.3" fill="#fff" stroke="#2c5cc0" strokeWidth="1.6" />
                    <path d="M6.5 9L1.5 14" stroke="#2c5cc0" strokeWidth="2.4" />
                </svg>
            </button>
            <button aria-label="Сообщения" className="relative h-5 w-7">
                <svg viewBox="0 0 28 20" className="h-5 w-7" aria-hidden="true">
                    <path d="M3 9C3 6 15 6 17 10C17 16 11 16 9 16L6 19V16C3 15 3 12 3 9Z" fill="#d8d8dc" stroke="#a0a0a8" />
                    <circle cx="15" cy="8" r="7.6" fill="#e02a18" />
                </svg>
                <span className="absolute top-0 left-2 w-[14px] text-center text-[11px] leading-4 text-white">1</span>
            </button>
        </div>
    </div>
);

/* ---------- taskbar ---------- */

const RoboLogo = () => (
    <>
        <rect width="22" height="22" fill="#14508f" />
        <path d="M5 18V5H16.800V12.500H10.500V17H17.500" stroke="#fff" strokeWidth="2.800" />
    </>
);

const MetaLogo = () => (
    <>
        <path d="M5 10C5 6 8 5 11 0C14 5 17 6 17 10Z" fill="#4ca048" stroke="#a8d8a0" strokeWidth=".7" />
        <path d="M1 19C-1 14 4 9 8 10L11 18L8 20Z" fill="#e4c432" stroke="#f4e490" strokeWidth=".7" />
        <path d="M14 10C18 9 23 14 21 18C18 21 13 20 11 18Z" fill="#3ca0dc" stroke="#a0d8f4" strokeWidth=".7" />
        <circle cx="11" cy="11.500" r="5" fill="#fff8ea" stroke="#e0b060" strokeWidth=".7" />
        <path d="M13 9.300H9.600V11.300C13.800 10.700 13.600 14.300 9.200 13.600" stroke="#e07818" strokeWidth="1.300" />
    </>
);

const taskIcons: Record<string, React.ReactNode> = {
    robo: <RoboLogo />,
    meta: <MetaLogo />,
    store: <><path d="M6 5V1H16V5" stroke="#3cb4f0" strokeWidth="1.8" /><path d="M1 4H21V19C21 20.5 20 21.5 18.500 21.500H3.500C2 21.500 1 20.500 1 19Z" fill="#f4f4f4" /><path d="M7 8.500H10.500V12H7Z" fill="#f05020" /><path d="M11.500 8.500H15V12H11.500Z" fill="#78b818" /><path d="M7 13H10.500V16.500H7Z" fill="#18a0e8" /><path d="M11.500 13H15V16.500H11.500Z" fill="#f8b800" /></>,
    mail: <><path d="M0 7L11 0L22 7V21H0Z" fill="#0f5fa8" /><path d="M0 7L11 14L22 7V21H0Z" fill="#3cb0ee" /><path d="M0 21L11 13L22 21Z" fill="#1c8fdc" /><path d="M2 6.500H20L11 13.500Z" fill="#fff" /></>,
    files: <><path d="M1 2H8L10 4H20V20H1Z" fill="#e8a82c" /><path d="M1 6H20V20H1Z" fill="#ffd568" /><path d="M4.500 20V12.500H16.500V20H13.500V16H7.500V20Z" fill="#3a8ed8" /></>,
    opera: <><ellipse cx="11" cy="11" rx="10" ry="10.800" fill="#e01c2c" /><ellipse cx="11" cy="11" rx="4.800" ry="8" fill="#1d2b38" /></>,
    thermo: <><path d="M1 3H8V19H1Z" fill="#f08030" /><path d="M1 10H8V19H1Z" fill="#c0d4f8" /><path d="M14 3H20V19H14Z" fill="#e8702c" /><path d="M14 9H20V19H14Z" fill="#4c80d8" /><path d="M12 2L8.500 18" stroke="#e8e8e8" strokeWidth="5" strokeLinecap="round" /><path d="M11.500 5L8.500 17" stroke="#c02828" strokeWidth="2" /><circle cx="8.500" cy="18" r="2.500" fill="#d02020" /></>,
    drop: <><path d="M11 1C13 6 18 9.500 18 14.500C18 23 4 23 4 14.500C4 9.500 9 6 11 1Z" fill="#5c84bc" /><ellipse cx="11.500" cy="15" rx="4" ry="3.500" fill="#b4cce8" /><path d="M11 2V9" stroke="#a8c0e0" strokeWidth="1.500" /></>,
    cards: <><path d="M8 3L18 0L21 11L11 14Z" fill="#fff" /><circle cx="14.500" cy="7" r="3" fill="#e01818" /><path d="M2 5L10 13M1 9L9 14M4 2L12 12" stroke="#ddd" strokeWidth="2" /><path d="M2 15.500H6V21.500H2Z" fill="#e02020" /><path d="M7 15.500H10V21.500H7Z" fill="#e8c820" /><path d="M11 15.500H14V21.500H11Z" fill="#28b828" /><path d="M15 15.500H19V21.500H15Z" fill="#18b8d0" /></>,
    calc: <><rect x="3" y="0" width="16" height="22" fill="#6f8ca8" /><path d="M5 2H17V6H5Z" fill="#50c0f8" /><path d="M5 8H8V11H5ZM9.500 8H12.500V11H9.500ZM14 8H17V11H14ZM5 12.500H8V15.500H5ZM9.500 12.500H12.500V15.500H9.500ZM5 17H8V20H5ZM9.500 17H12.500V20H9.500Z" fill="#e8f0f8" /><path d="M14 12.500H17V20H14Z" fill="#1858a8" /></>,
    camera: <><rect width="22" height="22" fill="#ececec" /><path d="M1 2H12M2 4H10M14 3H20M1 19H6M14 20H21" stroke="#888" strokeDasharray="2 1" /><path d="M2 10H13V17H2Z" fill="#555" stroke="#222" /><path d="M13 10H16V8H20V17H16V15H13Z" fill="#444" stroke="#111" /><circle cx="6" cy="8" r="2.500" fill="#999" stroke="#333" /><circle cx="11.500" cy="8" r="2.500" fill="#bbb" stroke="#333" /><path d="M4 12H10M4 14.500H10" stroke="#bbb" /><path d="M5 21L8 17L11 21" stroke="#333" strokeWidth="1.500" /></>,
    screen: <><rect x=".8" y=".8" width="20.400" height="20.400" fill="#e9e9e4" stroke="#888" /><rect x="3" y="3" width="16" height="15" fill="#38787c" /><rect x="5" y="6" width="12" height="10" fill="#eef4ff" /><path d="M5 6H17V8H5Z" fill="#3070d8" /><path d="M6 9H10V12H6Z" fill="#e05030" /><path d="M7 12H11V15H7Z" fill="#40a840" /></>,
    gear: <Settings size={20} color="#fff" strokeWidth={2.6} />,
};

const tasks = [
    'store', 'mail', 'robo', 'meta', 'robo', 'meta', 'meta', 'robo', 'robo', 'files', 'opera', 'thermo', 'qb', 'robo',
    'meta', 'meta', 'alpari', 'meta5', 'robo', 'drop', 'skype', 'robo', 'robo', 'gear', 'cards', 'calc', 'camera', 'screen', 'robo',
];

const TaskIcon = ({ name }: { name: string }) => {
    if (name === 'qb') {
        return <span className="grid size-[22px] place-items-center rounded-full border border-[#a8ccf0] bg-[#4c8cdc] text-[13px] leading-none text-white">qb</span>;
    }
    if (name === 'skype') {
        return <span className="grid size-5 place-items-center rounded-full bg-[#10a8f0] text-[14px] leading-none font-bold text-white">S</span>;
    }
    if (name === 'alpari') {
        return (
            <span className="block w-6 text-center text-[8px] leading-[8px] font-bold text-[#0c1318]">
                <svg viewBox="0 0 22 12" className="mx-auto h-3 w-[22px]" fill="none" strokeDasharray="2 .7">
                    <path d="M1 7C6 0 16 0 21 7" stroke="#8c3830" strokeWidth="2" />
                    <path d="M1 9.500C6 2.500 16 2.500 21 9.500" stroke="#9c6028" strokeWidth="2" />
                    <path d="M1 12C6 5 16 5 21 12" stroke="#5c7c28" strokeWidth="2" />
                </svg>
                alpari
            </span>
        );
    }
    if (name === 'meta5') return <svg viewBox="0 0 22 22" className="size-[23px]" fill="none"><MetaLogo /></svg>;
    const size = name === 'meta' ? 'size-5' : 'size-[22px]';
    return <svg viewBox="0 0 22 22" className={size} fill="none">{name === 'gear' ? <g transform="translate(1 1)">{taskIcons.gear}</g> : taskIcons[name]}</svg>;
};

const Taskbar = () => (
    <footer className="flex h-8 items-center border-t border-[#8a9298] bg-[#1d2c39] text-white">
        <div className="ml-[9px] flex w-[1281px] min-w-0 items-center">
            {tasks.map((name, i) => (
                <button key={i} aria-label={name} className="flex h-[26px] flex-1 items-center justify-center">
                    <TaskIcon name={name} />
                </button>
            ))}
        </div>
        <div className="mr-0.5 ml-auto flex h-full items-center border-r border-[#6b7780] pr-1.5">
            <button aria-label="Скрытые значки" className="w-[22px]"><ChevronUp size={16} className="mx-auto" /></button>
            <button aria-label="Антивирус" className="w-[22px]">
                <svg viewBox="0 0 16 16" className="mx-auto size-4">
                    <circle cx="8" cy="8" r="7.5" fill="#f4cc20" />
                    <path d="M8 .5A7.500 7.500 0 0 0 4 14.500C10 12 12 6 8 .5Z" fill="#c8d828" />
                    <path d="M8 4V12M4 8H12" stroke="#107818" strokeWidth="2" />
                </svg>
            </button>
            <button aria-label="Lightshot" className="h-full w-5 bg-[#43505c]">
                <svg viewBox="0 0 16 16" className="mx-auto size-4">
                    <path d="M1 15C3 8 8 3 15 1C14 7 9 12 3 13Z" fill="#9c60c8" />
                    <path d="M1 15L12 4" stroke="#e0c8f4" />
                </svg>
            </button>
            <button aria-label="Сеть" className="w-[23px]">
                <svg viewBox="0 0 16 16" className="mx-auto size-4" fill="none" stroke="#e8e8e8" strokeWidth="1.1">
                    <path d="M6 3H15.400V11H4.500V8M8 14.500H12M10 11V14.500M1 1.500H5V5H1ZM3 5V14H6" />
                </svg>
            </button>
            <button aria-label="Громкость" className="w-[22px]"><Volume2 size={16} strokeWidth={1.4} className="mx-auto" /></button>
            <span className="w-[34px] text-center text-[10px]">РУС</span>
            <div className="mr-1 w-[62px] text-center text-[10px] leading-4">
                <div>10:09</div>
                <div>14.06.2024</div>
            </div>
            <button aria-label="Уведомления" className="relative h-5 w-[30px]">
                <svg viewBox="0 0 26 20" className="h-5 w-[26px]">
                    <path d="M3 2H18V14H9L7 17V14H3Z" fill="#fff" />
                    <path d="M5.500 5H15.500M5.500 8H15.500M5.500 11H12" stroke="#1d2c39" />
                    <circle cx="18" cy="13" r="6.500" fill="#3c4650" stroke="#8a949c" />
                </svg>
                <span className="absolute top-[6px] left-[12px] w-3 text-center text-[10px] leading-[14px] font-semibold">3</span>
            </button>
        </div>
    </footer>
);

const App = () => (
    <div className={`min-h-screen bg-[#232323] pr-[6px] ${uiFont}`}>
        <nav className="flex h-[6px] items-end gap-4 overflow-hidden bg-[#f0f0f0] text-[10px] leading-[17px] text-[#999]">
            <span className="-ml-2.5">Вид</span>
            <span>Вставка</span>
            <span>Графики</span>
            <span>Сервис</span>
            <span>Окно</span>
            <span>Справка</span>
            <span className="mr-[2px] ml-auto flex gap-1 self-start">
                <span className="h-1 w-3.5 bg-[#dcdcdc]" />
                <span className="h-1 w-3.5 bg-[#dcdcdc]" />
                <span className="h-1 w-3.5 bg-[#dcdcdc]" />
            </span>
        </nav>
        <Toolbar />

        <main className="relative -mt-px pt-0.5">
            <Chart />
            <PricePanel />
        </main>

        <div className="flex h-[18px] items-start bg-[#f0f0f0] text-[10px] leading-[15px]">
            <button className="ml-[2px] h-4 w-[75px] border-l border-[#888] text-[#808080]">EURUSD,H1</button>
            <button className="h-4 w-[76px] border border-t-0 border-black bg-white text-black">EURUSD,H4</button>
            <div className="ml-auto flex h-4 items-center gap-3 pr-2">
                <button aria-label="Влево" className="size-0 border-y-3 border-r-3 border-y-transparent border-r-[#888]" />
                <button aria-label="Вправо" className="size-0 border-y-3 border-l-3 border-y-transparent border-l-[#888]" />
            </div>
        </div>

        <div className="flex h-5 items-center bg-[#f0f0f0] text-[10px] leading-[18px] text-[#111]">
            <span className="-ml-[38px] flex-1 overflow-hidden whitespace-nowrap">Для справки нажмите F1</span>
            <span className="w-[104px] border-l border-[#a8a8a8] pl-1">Euro</span>
            <span className="h-4 w-[92px] border-l border-[#a8a8a8]" />
            <span className="h-4 w-16 border-l border-[#a8a8a8]" />
            <span className="h-4 w-16 border-l border-[#a8a8a8]" />
            <span className="h-4 w-[61px] border-l border-[#a8a8a8]" />
            <span className="h-4 w-[63px] border-l border-[#a8a8a8]" />
            <span className="h-4 w-[60px] border-l border-[#a8a8a8]" />
            <span className="flex w-[116px] items-center gap-1 border-l border-[#a8a8a8] pl-1">
                <svg viewBox="0 0 22 12" className="h-3 w-[22px]">
                    <path d="M1 0V12M4 0V12M7 0V12M10 0V12M13 0V12M16 0V12M19 0V12M21.500 0V12" stroke="#0f4470" strokeWidth="2" />
                    <path d="M0 0H22V2L10 7L0 9Z" fill="#f0f0f0" />
                    <path d="M1 0V8M4 0V7.500M7 0V7M10 0V6M13 0V5M16 0V4M19 0V2.500M21.500 0V2" stroke="#6c8418" strokeWidth="2" />
                </svg>
                <span className="whitespace-nowrap">26209/18 kb</span>
                <svg viewBox="0 0 12 12" className="ml-auto size-3 self-end"><path d="M0 12L12 0M4 12L12 4M8 12L12 8" stroke="#999" /></svg>
            </span>
        </div>

        <Taskbar />
    </div>
);

export default App;
